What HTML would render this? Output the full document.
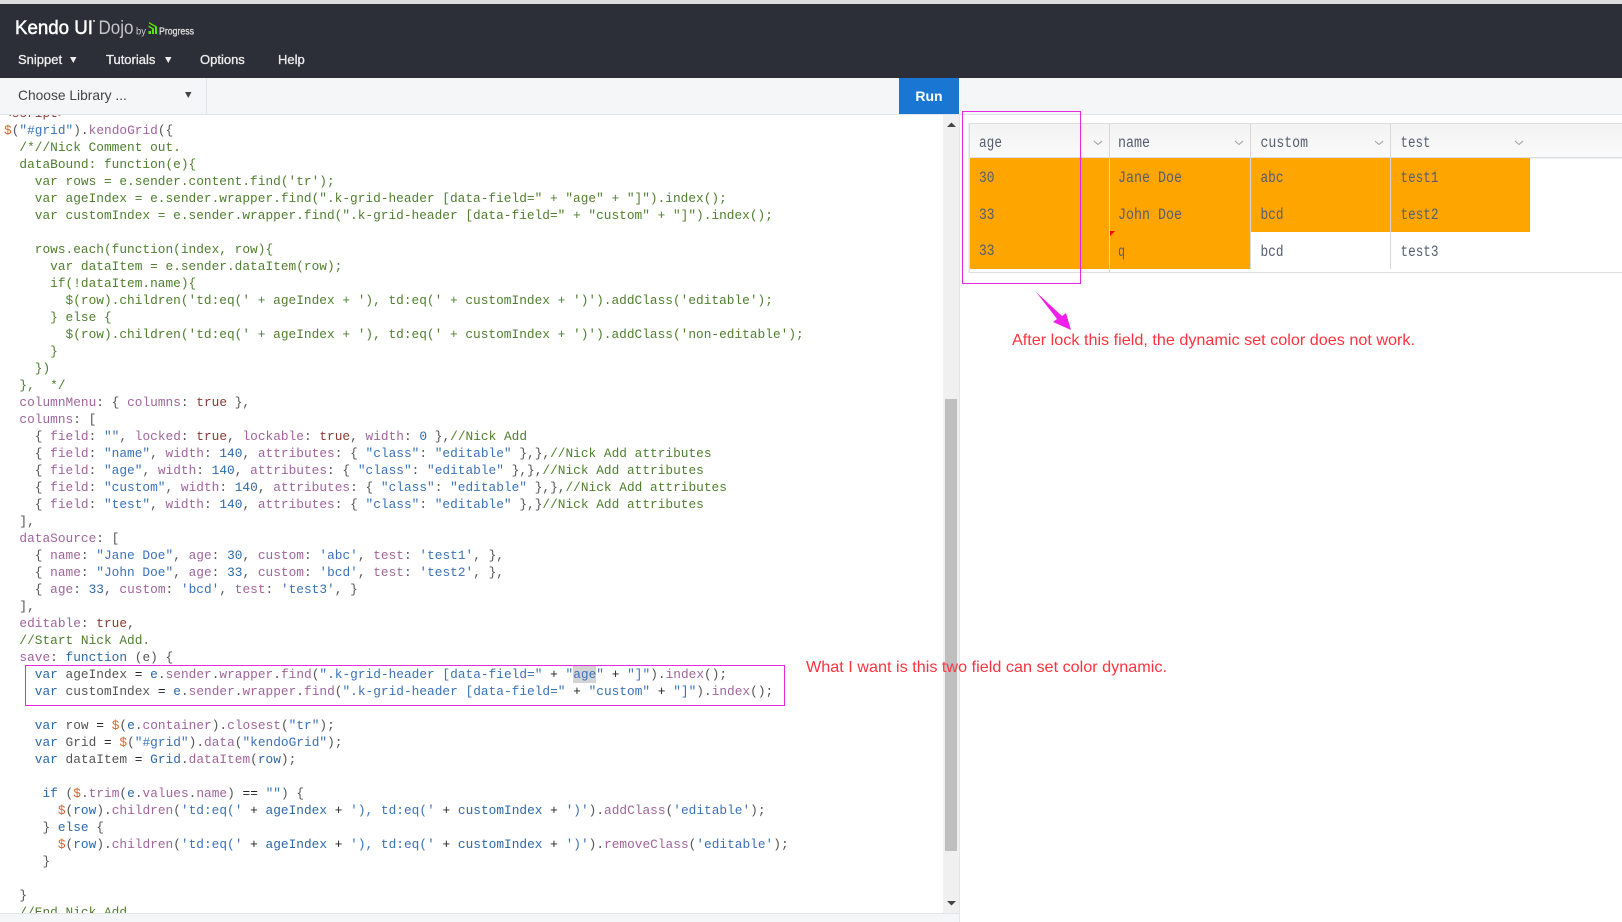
<!DOCTYPE html>
<html lang="en"><head><meta charset="utf-8"><title>Kendo UI Dojo</title>
<style>
html,body{margin:0;padding:0;width:1622px;height:922px;overflow:hidden;background:#fff;font-family:"Liberation Sans",sans-serif}
.a{position:absolute}
#code{position:absolute;left:0;top:115px;width:943px;height:798px;overflow:hidden;background:#fff}
pre{position:absolute;left:4px;top:-10px;margin:0;font:12.8px/17px "Liberation Mono",monospace;letter-spacing:.01px;color:#555}
pre i{font-style:normal}
.k{color:#2c68a8}.p{color:#a0649c}.s{color:#3a72b8}.n{color:#2c68a8}.b{color:#8a3a30}.d{color:#d9652b}.c{color:#4f7f2e}.o{color:#222}.t{color:#8a3a30}
.h{background:#d4d4d4;display:inline-block;height:17px;vertical-align:top}
.nav{position:absolute;top:52px;font-size:13px;line-height:16px;color:#eee;-webkit-text-stroke:.3px #eee}
</style></head><body>
<div class="a" style="left:0;top:0;width:1622px;height:4px;background:#dcdcdc"></div>
<div class="a" style="left:0;top:4px;width:1622px;height:74px;background:#2d2f38"></div>
<div class="nav" style="left:18px">Snippet</div>
<div class="nav" style="left:106px">Tutorials</div>
<div class="nav" style="left:200px">Options</div>
<div class="nav" style="left:278px">Help</div>
<div class="a" style="left:0;top:78px;width:1622px;height:36px;background:#f5f6f8;border-bottom:1px solid #dfe5e8"></div>
<div class="a" style="left:206px;top:78px;width:1px;height:36px;background:#dfe5e8"></div>
<div class="a" style="left:18px;top:88px;font-size:13.8px;line-height:16px;color:#444">Choose Library ...</div>
<div class="a" style="left:899px;top:78px;width:60px;height:36px;background:#1976d2;color:#fff;font-weight:bold;font-size:14px;line-height:36px;text-align:center">Run</div>
<div id="code"><pre><i class="t">&lt;script&gt;</i>
<i class="d">$</i>(<i class="s">"#grid"</i>).<i class="p">kendoGrid</i>({
<i class="c">  /*//Nick Comment out.
  dataBound: function(e){
    var rows = e.sender.content.find('tr');
    var ageIndex = e.sender.wrapper.find(".k-grid-header [data-field=" + "age" + "]").index();
    var customIndex = e.sender.wrapper.find(".k-grid-header [data-field=" + "custom" + "]").index();

    rows.each(function(index, row){
      var dataItem = e.sender.dataItem(row);
      if(!dataItem.name){
        $(row).children('td:eq(' + ageIndex + '), td:eq(' + customIndex + ')').addClass('editable');
      } else {
        $(row).children('td:eq(' + ageIndex + '), td:eq(' + customIndex + ')').addClass('non-editable');
      }
    })
  },  */</i>
  <i class="p">columnMenu</i>: { <i class="p">columns</i>: <i class="b">true</i> },
  <i class="p">columns</i>: [
    { <i class="p">field</i>: <i class="s">""</i>, <i class="p">locked</i>: <i class="b">true</i>, <i class="p">lockable</i>: <i class="b">true</i>, <i class="p">width</i>: <i class="n">0</i> },<i class="c">//Nick Add</i>
    { <i class="p">field</i>: <i class="s">"name"</i>, <i class="p">width</i>: <i class="n">140</i>, <i class="p">attributes</i>: { <i class="s">"class"</i>: <i class="s">"editable"</i> },},<i class="c">//Nick Add attributes</i>
    { <i class="p">field</i>: <i class="s">"age"</i>, <i class="p">width</i>: <i class="n">140</i>, <i class="p">attributes</i>: { <i class="s">"class"</i>: <i class="s">"editable"</i> },},<i class="c">//Nick Add attributes</i>
    { <i class="p">field</i>: <i class="s">"custom"</i>, <i class="p">width</i>: <i class="n">140</i>, <i class="p">attributes</i>: { <i class="s">"class"</i>: <i class="s">"editable"</i> },},<i class="c">//Nick Add attributes</i>
    { <i class="p">field</i>: <i class="s">"test"</i>, <i class="p">width</i>: <i class="n">140</i>, <i class="p">attributes</i>: { <i class="s">"class"</i>: <i class="s">"editable"</i> },}<i class="c">//Nick Add attributes</i>
  ],
  <i class="p">dataSource</i>: [
    { <i class="p">name</i>: <i class="s">"Jane Doe"</i>, <i class="p">age</i>: <i class="n">30</i>, <i class="p">custom</i>: <i class="s">'abc'</i>, <i class="p">test</i>: <i class="s">'test1'</i>, },
    { <i class="p">name</i>: <i class="s">"John Doe"</i>, <i class="p">age</i>: <i class="n">33</i>, <i class="p">custom</i>: <i class="s">'bcd'</i>, <i class="p">test</i>: <i class="s">'test2'</i>, },
    { <i class="p">age</i>: <i class="n">33</i>, <i class="p">custom</i>: <i class="s">'bcd'</i>, <i class="p">test</i>: <i class="s">'test3'</i>, }
  ],
  <i class="p">editable</i>: <i class="b">true</i>,
  <i class="c">//Start Nick Add.</i>
  <i class="p">save</i>: <i class="k">function</i> (e) {
    <i class="k">var</i> ageIndex <i class="o">=</i> <i class="k">e</i>.<i class="p">sender</i>.<i class="p">wrapper</i>.<i class="p">find</i>(<i class="s">".k-grid-header [data-field="</i> <i class="o">+</i> <i class="s">"</i><i class="s h">age</i><i class="s">"</i> <i class="o">+</i> <i class="s">"]"</i>).<i class="p">index</i>();
    <i class="k">var</i> customIndex <i class="o">=</i> <i class="k">e</i>.<i class="p">sender</i>.<i class="p">wrapper</i>.<i class="p">find</i>(<i class="s">".k-grid-header [data-field="</i> <i class="o">+</i> <i class="s">"custom"</i> <i class="o">+</i> <i class="s">"]"</i>).<i class="p">index</i>();

    <i class="k">var</i> row <i class="o">=</i> <i class="d">$</i>(<i class="k">e</i>.<i class="p">container</i>).<i class="p">closest</i>(<i class="s">"tr"</i>);
    <i class="k">var</i> Grid <i class="o">=</i> <i class="d">$</i>(<i class="s">"#grid"</i>).<i class="p">data</i>(<i class="s">"kendoGrid"</i>);
    <i class="k">var</i> dataItem <i class="o">=</i> <i class="k">Grid</i>.<i class="p">dataItem</i>(<i class="k">row</i>);

     <i class="k">if</i> (<i class="d">$</i>.<i class="p">trim</i>(<i class="k">e</i>.<i class="p">values</i>.<i class="p">name</i>) <i class="o">==</i> <i class="s">""</i>) {
       <i class="d">$</i>(<i class="k">row</i>).<i class="p">children</i>(<i class="s">'td:eq('</i> <i class="o">+</i> <i class="k">ageIndex</i> <i class="o">+</i> <i class="s">'), td:eq('</i> <i class="o">+</i> <i class="k">customIndex</i> <i class="o">+</i> <i class="s">')'</i>).<i class="p">addClass</i>(<i class="s">'editable'</i>);
     } <i class="k">else</i> {
       <i class="d">$</i>(<i class="k">row</i>).<i class="p">children</i>(<i class="s">'td:eq('</i> <i class="o">+</i> <i class="k">ageIndex</i> <i class="o">+</i> <i class="s">'), td:eq('</i> <i class="o">+</i> <i class="k">customIndex</i> <i class="o">+</i> <i class="s">')'</i>).<i class="p">removeClass</i>(<i class="s">'editable'</i>);
     }

  }
  <i class="c">//End Nick Add</i></pre></div>
<div class="a" style="left:943px;top:115px;width:16px;height:798px;background:#f0f0f0"></div>
<div class="a" style="left:945px;top:399px;width:12px;height:452px;background:#bfbfbf"></div>
<div class="a" style="left:959px;top:115px;width:1px;height:807px;background:#e3e5e8"></div>
<div class="a" style="left:0;top:913px;width:959px;height:9px;background:#f5f6f8;border-top:1px solid #e3e5e8;box-sizing:border-box"></div>
<svg class="a" style="left:0;top:0" width="1622" height="922" viewBox="0 0 1622 922" font-family="Liberation Sans, sans-serif">
<!-- logo -->
<text x="15" y="34" font-size="19.500" fill="#fff" stroke="#fff" stroke-width=".5" textLength="78" lengthAdjust="spacingAndGlyphs">Kendo UI</text>
<circle cx="94" cy="21" r="1" fill="#ddd"/>
<text x="98.500" y="34" font-size="19.500" fill="#c4c6ca" textLength="35" lengthAdjust="spacingAndGlyphs">Dojo</text>
<text x="136" y="34.500" font-size="10" fill="#ccc" textLength="10" lengthAdjust="spacingAndGlyphs">by</text>
<path d="M148.500 34v-3h2.500v3zM152 34v-5l-3.500-2v-1.500l5.500 3v5.500zM155 34v-7l-6-3.500v-1.500l8 4.500v7.500z" fill="#5ce500"/>
<text x="159" y="34.500" font-size="10.500" fill="#e4e4e4" stroke="#e4e4e4" stroke-width=".25" textLength="35" lengthAdjust="spacingAndGlyphs">Progress</text>
<!-- small triangles -->
<path d="M70 57h6.500l-3.250 6zM165 57h6.500l-3.250 6z" fill="#eee"/>
<path d="M185 92h6.500l-3.250 6z" fill="#444"/>
<path d="M947 127h9l-4.500-4.500z" fill="#444"/>
<path d="M947 901h9l-4.500 4.500z" fill="#444"/>
<!-- grid -->
<defs><linearGradient id="g" x1="0" y1="0" x2="0" y2="1"><stop offset="0" stop-color="#f3f3f3"/><stop offset="1" stop-color="#fafafa"/></linearGradient></defs>
<rect x="970" y="124" width="652" height="33" fill="url(#g)"/>
<rect x="968.500" y="123" width="653.500" height="1" fill="#dcdfe2"/>
<rect x="968.500" y="157" width="653.500" height="1.500" fill="#dcdfe2"/>
<rect x="968.500" y="123" width="1.500" height="150" fill="#dcdfe2"/>
<rect x="968.500" y="272" width="653.500" height="1" fill="#dcdfe2"/>
<rect x="970" y="158" width="560" height="74" fill="#ffa500"/>
<rect x="970" y="232" width="280" height="37" fill="#ffa500"/>
<rect x="1109" y="124" width="1" height="148" fill="#d8d8d8"/>
<rect x="1250" y="124" width="1" height="145" fill="#d8d8d8"/>
<rect x="1390" y="124" width="1" height="145" fill="#d8d8d8"/>
<path d="M1110 231h5l-5 5z" fill="#f00"/>
<g fill="none" stroke="#9a9ea6" stroke-width="1"><path d="M1094 141l4 3.500 4-3.500M1235 141l4 3.500 4-3.500M1375 141l4 3.500 4-3.500M1515 141l4 3.500 4-3.500"/></g>
<g font-family="Liberation Mono, monospace" font-size="15.500" fill="#565e70">
<text x="979" y="147" textLength="23" lengthAdjust="spacingAndGlyphs">age</text>
<text x="1118" y="147" textLength="32" lengthAdjust="spacingAndGlyphs">name</text>
<text x="1260.500" y="147" textLength="47.500" lengthAdjust="spacingAndGlyphs">custom</text>
<text x="1400.500" y="147" textLength="30" lengthAdjust="spacingAndGlyphs">test</text>
<text x="979" y="182" textLength="15.500" lengthAdjust="spacingAndGlyphs">30</text>
<text x="1118" y="182" textLength="64" lengthAdjust="spacingAndGlyphs">Jane Doe</text>
<text x="1260.500" y="182" textLength="23" lengthAdjust="spacingAndGlyphs">abc</text>
<text x="1400.500" y="182" textLength="38" lengthAdjust="spacingAndGlyphs">test1</text>
<text x="979" y="219" textLength="15.500" lengthAdjust="spacingAndGlyphs">33</text>
<text x="1118" y="219" textLength="64" lengthAdjust="spacingAndGlyphs">John Doe</text>
<text x="1260.500" y="219" textLength="23" lengthAdjust="spacingAndGlyphs">bcd</text>
<text x="1400.500" y="219" textLength="38" lengthAdjust="spacingAndGlyphs">test2</text>
<text x="979" y="255" textLength="15.500" lengthAdjust="spacingAndGlyphs">33</text>
<text x="1118" y="256" textLength="7" lengthAdjust="spacingAndGlyphs">q</text>
<text x="1260.500" y="256" textLength="23" lengthAdjust="spacingAndGlyphs">bcd</text>
<text x="1400.500" y="256" textLength="38" lengthAdjust="spacingAndGlyphs">test3</text>
</g>
<!-- annotations -->
<rect x="962.500" y="111.500" width="118" height="172" fill="none" stroke="#e828e0" stroke-width="1"/>
<rect x="25.500" y="665.500" width="759" height="40" fill="none" stroke="#e828e0" stroke-width="1"/>
<path d="M1036 292L1062 316L1066 313L1071 330L1053 322L1057 319z" fill="#f020ea"/>
<text x="1012" y="345" font-size="16" fill="#ff3340" textLength="403" lengthAdjust="spacingAndGlyphs">After lock this field, the dynamic set color does not work.</text>
<text x="806" y="672" font-size="16" fill="#ff3340" textLength="361" lengthAdjust="spacingAndGlyphs">What I want is this two field can set color dynamic.</text>
</svg>
</body></html>
